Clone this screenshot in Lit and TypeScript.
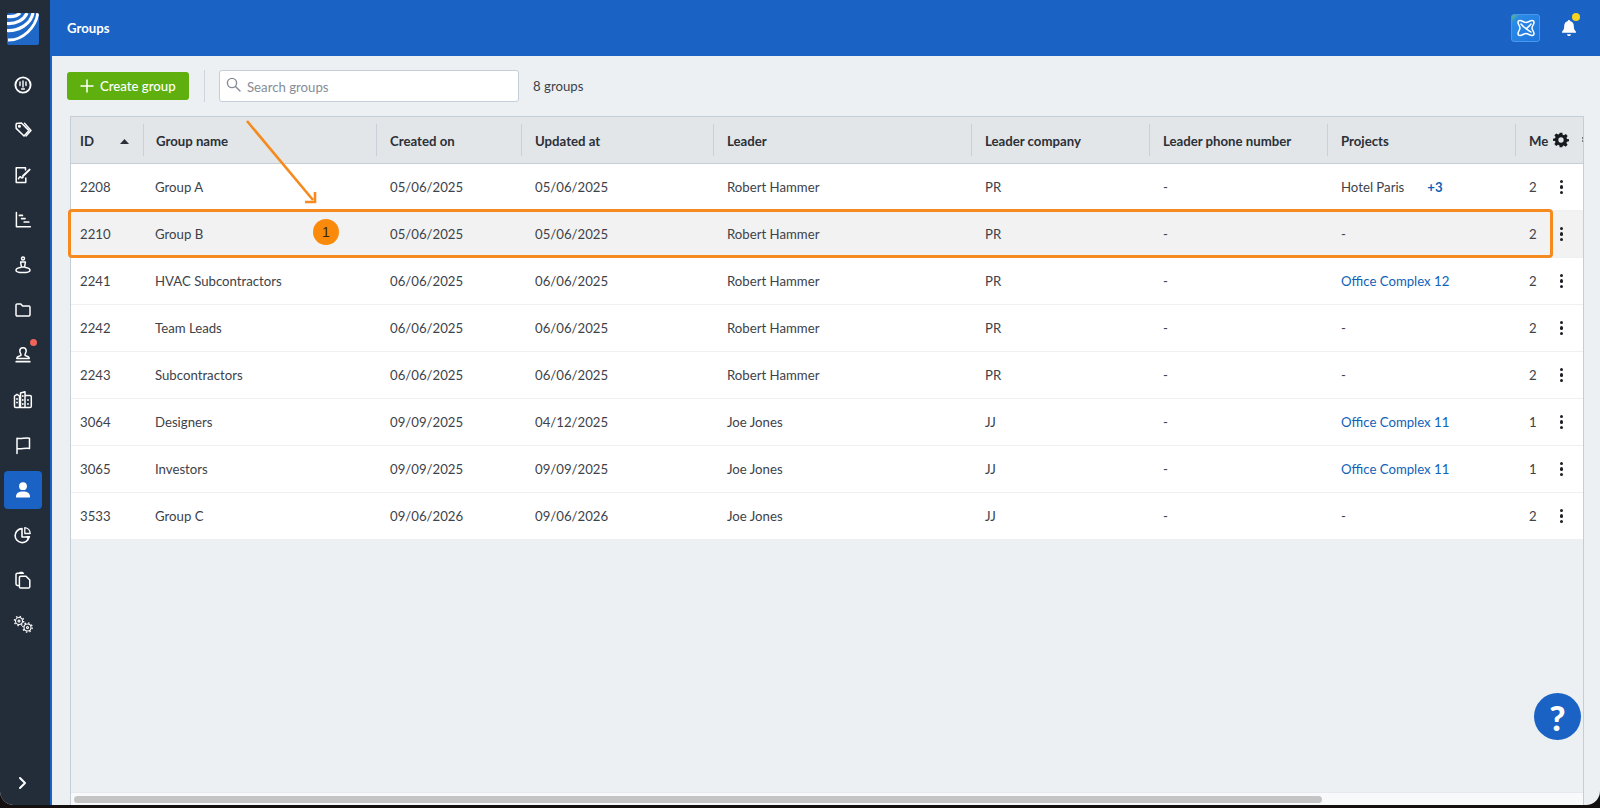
import { LitElement, html, css, svg } from 'lit';
import { customElement } from 'lit/decorators.js';

const line = (body: unknown) => html`<svg class="icon" viewBox="0 0 20 20" fill="none" stroke="#fff" stroke-width="1.5" stroke-linecap="round" stroke-linejoin="round">${body}</svg>`;

const NAV = [
  { name: 'dashboard', icon: line(svg`<circle cx="10" cy="10" r="7.6" stroke-width="1.9"/><path d="M10 6v6M7 7v3.5M13 7v3.5M8.6 14h2.8" stroke-width="1.4"/>`) },
  { name: 'tags', icon: line(svg`<path d="M3 5.5 3.4 3.4l5-.4 7.6 7.6-5 5.4L3.2 8.4z"/><path d="M11.5 3.2 18 10.4l-5 5.6"/><circle cx="6.4" cy="6.2" r=".8"/>`) },
  { name: 'reports', icon: line(svg`<path d="M12.5 5V2.8H3.2v14.6h9.6v-4.4"/><path d="M5.5 13.8c1-2 1.8-2.6 2.4-1.6.5 1 1.2 1 2.1.2"/><path d="m10 11 6.6-6.4" stroke-width="2"/>`) },
  { name: 'planning', icon: line(svg`<path d="M3.4 2.6v14.2h14"/><path d="M6.4 5.4h3M8.6 8.6h3.4M11.2 12h4.6" stroke-width="1.7"/>`) },
  { name: 'site', icon: line(svg`<circle cx="10" cy="3.6" r="1.5"/><path d="M7.6 7h4.8l-.8 5H8.4z"/><path d="M7.6 12.6C4.8 13 3 14 3 15.2c0 1.4 3 2.4 7 2.4s7-1 7-2.4c0-1.2-1.8-2.2-4.6-2.6"/>`) },
  { name: 'files', icon: line(svg`<path d="M3 5.2c0-.7.5-1.2 1.2-1.2h3.6l1.8 2h6.2c.7 0 1.2.5 1.2 1.2v7.6c0 .7-.5 1.2-1.2 1.2H4.2c-.7 0-1.2-.5-1.2-1.2z"/>`) },
  { name: 'approvals', dot: true, icon: line(svg`<path d="M8 10.4c.3-1.8-1.2-2.6-1.2-4.4a3.2 3.2 0 0 1 6.4 0c0 1.8-1.500 2.600-1.200 4.400l3.200 1.300c.8.300 1 .9 1 1.800H3.800c0-.9.200-1.500 1-1.800z"/><path d="M3.200 16.700h13.600" stroke-width="1.700"/>`) },
  { name: 'companies', icon: line(svg`<path d="M1.500 6 4 4.300l2.500 1.700v11.500H2.800c-.8 0-1.300-.5-1.300-1.300z"/><path d="M7.500 17.500V3L12 1.800v15.700zM12 5.500h5c.8 0 1.300.5 1.300 1.300v9.400c0 .8-.5 1.300-1.300 1.300h-5"/><path d="M4 9v.1M4 12.500v.1M9.800 6v.1M9.800 10v.1M9.800 14v.1M15 10v.1M15 14v.1" stroke-width="1.800"/>`) },
  { name: 'issues', icon: line(svg`<path d="M4 18.500V3.200c3.500 1.200 8.500-1 12.500 0v10.300c-4-1-9 1.200-12.500 0"/>`) },
  { name: 'groups', active: true, icon: html`<svg class="icon" viewBox="0 0 20 20" fill="#fff"><circle cx="10" cy="6.200" r="3.900"/><path d="M3 17c0-3.800 2.600-5.400 7-5.400s7 1.600 7 5.400c0 .4-.3.600-.7.600H3.700c-.4 0-.7-.2-.7-.6z"/></svg>` },
  { name: 'analytics', icon: line(svg`<path d="M9 3.600a7 7 0 1 0 7 8.400H9z" stroke-width="1.600"/><path d="M11.800 2.600a6 6 0 0 1 5.400 5.900h-5.400z" stroke-width="1.300"/><path d="m12.800 11 4.600.1-2.300 3.600z" fill="#fff" stroke="none"/>`) },
  { name: 'documents', icon: line(svg`<path d="M5.500 15.500H4.400c-.8 0-1.400-.6-1.400-1.400V4.600c0-.8.600-1.400 1.400-1.400h6"/><path d="M6.400 7.600c0-.8.600-1.400 1.400-1.400h5.200l3.800 3.800v6.700c0 .8-.6 1.400-1.400 1.400H7.800c-.8 0-1.400-.6-1.400-1.400z"/><path d="M7 2.400h2.400"/>`) },
  { name: 'settings', icon: line(svg`<g stroke-width="1.100"><circle cx="6" cy="6" r="3.500"/><circle cx="6" cy="6" r="4.700" stroke-width="1.300" stroke-dasharray="1.500 2.190" stroke-linecap="butt"/><circle cx="6" cy="6" r="1"/><circle cx="14.500" cy="12.500" r="3.500"/><circle cx="14.500" cy="12.500" r="4.700" stroke-width="1.300" stroke-dasharray="1.500 2.190" stroke-linecap="butt"/><circle cx="14.500" cy="12.500" r="1"/></g>`) },
];

const ROWS = [
  { id: '2208', name: 'Group A', created: '05/06/2025', updated: '05/06/2025', leader: 'Robert Hammer', company: 'PR', project: 'Hotel Paris', more: '+3', members: '2' },
  { id: '2210', name: 'Group B', created: '05/06/2025', updated: '05/06/2025', leader: 'Robert Hammer', company: 'PR', project: '-', members: '2', selected: true },
  { id: '2241', name: 'HVAC Subcontractors', created: '06/06/2025', updated: '06/06/2025', leader: 'Robert Hammer', company: 'PR', project: 'Office Complex 12', link: true, members: '2' },
  { id: '2242', name: 'Team Leads', created: '06/06/2025', updated: '06/06/2025', leader: 'Robert Hammer', company: 'PR', project: '-', members: '2' },
  { id: '2243', name: 'Subcontractors', created: '06/06/2025', updated: '06/06/2025', leader: 'Robert Hammer', company: 'PR', project: '-', members: '2' },
  { id: '3064', name: 'Designers', created: '09/09/2025', updated: '04/12/2025', leader: 'Joe Jones', company: 'JJ', project: 'Office Complex 11', link: true, members: '1' },
  { id: '3065', name: 'Investors', created: '09/09/2025', updated: '09/09/2025', leader: 'Joe Jones', company: 'JJ', project: 'Office Complex 11', link: true, members: '1' },
  { id: '3533', name: 'Group C', created: '09/06/2026', updated: '09/06/2026', leader: 'Joe Jones', company: 'JJ', project: '-', members: '2' },
];

const COLUMNS = ['Group name', 'Created on', 'Updated at', 'Leader', 'Leader company', 'Leader phone number', 'Projects', 'Me'];

@customElement('app-root')
export class AppRoot extends LitElement {
  static styles = css`
    :host {
      display: block;
      height: 808px;
      background: #14100f;
      font-family: Lato, 'Liberation Sans', sans-serif;
      font-size: 13.2px;
      color: #3d4249;
    }

    .frame {
      position: relative;
      display: flex;
      height: 805px;
      overflow: hidden;
      background: #ecf0f3;
      border-radius: 0 0 14px 14px;
    }

    .sidebar {
      flex: 0 0 46px;
      display: flex;
      flex-direction: column;
      align-items: center;
      padding: 13px 4px 6px 0;
      background: #232c39;
      border-right: 2px solid #1a62c4;
    }

    .logo {
      width: 32px;
      height: 32px;
      margin-bottom: 21px;
      border-radius: 2px;
    }

    .nav {
      display: flex;
      flex-direction: column;
      gap: 7px;
    }

    .nav-item {
      position: relative;
      display: flex;
      align-items: center;
      justify-content: center;
      width: 38px;
      height: 38px;
      border-radius: 4px;
    }

    .nav-item.active {
      background: #1a62c4;
    }

    .nav-dot {
      position: absolute;
      top: 3px;
      right: 5px;
      width: 7px;
      height: 7px;
      border-radius: 50%;
      background: #f0645a;
    }

    .icon {
      width: 20px;
      height: 20px;
    }

    .expand {
      margin-top: auto;
      display: flex;
      align-items: center;
      height: 32px;
    }

    .main {
      flex: 1;
      min-width: 0;
      display: flex;
      flex-direction: column;
    }

    .topbar {
      flex: 0 0 56px;
      box-sizing: border-box;
      display: flex;
      align-items: center;
      padding: 0 15px 1px;
      background: #1a62c4;
      color: #fff;
      font-weight: 700;
    }

    .topbar-title {
      flex: 1;
    }

    .atom {
      display: flex;
      align-items: center;
      justify-content: center;
      width: 29px;
      height: 28px;
      box-sizing: border-box;
      border: 1px solid #4a97ee;
      border-radius: 3px;
      background: linear-gradient(135deg, #62bd7c 0%, #2a8be6 16%, #1f74de 100%);
    }

    .bell {
      position: relative;
      display: flex;
      margin: 0 8px 0 21px;
    }

    .bell-dot {
      position: absolute;
      top: -6px;
      right: -3px;
      width: 8px;
      height: 8px;
      border-radius: 50%;
      background: #f7d31e;
    }

    .toolbar {
      flex: 0 0 60px;
      display: flex;
      align-items: center;
      padding-left: 15px;
    }

    .create {
      display: flex;
      align-items: center;
      gap: 6px;
      height: 28px;
      width: 122px;
      box-sizing: border-box;
      padding: 0 0 1px 13px;
      border-radius: 3px;
      background: #5fb00f;
      color: #fff;
      font-weight: 500;
    }

    .divider {
      width: 1px;
      height: 32px;
      margin: 0 14px 0 15px;
      background: #cfd6dd;
    }

    .search {
      display: flex;
      align-items: center;
      gap: 6px;
      width: 300px;
      height: 32px;
      box-sizing: border-box;
      padding: 1px 0 0 6px;
      border: 1px solid #c5ced8;
      border-radius: 3px;
      background: #fff;
      color: #868d96;
    }

    .search svg {
      margin-top: -5px;
    }

    .count {
      margin-left: 14px;
    }

    .table {
      flex: 1;
      display: flex;
      flex-direction: column;
      min-height: 0;
      margin: 0 16px 0 18px;
      border: 1px solid #c5ced8;
      border-width: 1px 1px 0;
    }

    .row {
      display: grid;
      grid-template-columns: 72px 233px 145px 192px 258px 178px 178px 188px 34px 1fr;
      align-items: center;
      height: 47px;
      box-sizing: border-box;
      padding-bottom: 1px;
      background: #fff;
      border-bottom: 1px solid #eef0f2;
    }

    .row.selected {
      background: #f2f2f2;
    }

    .row.head {
      padding-bottom: 0;
      background: #e2e6e9;
      border-bottom: 1px solid #c5ced8;
      color: #2b3038;
      font-weight: 700;
    }

    .cell {
      padding-left: 14px;
      white-space: nowrap;
      overflow: hidden;
    }

    .cell.first {
      padding-left: 9px;
    }

    .head .cell {
      display: flex;
      align-items: center;
      height: 32px;
      padding: 2px 0 0 13px;
      box-sizing: border-box;
      border-left: 1px solid #c9d0d8;
    }

    .head .cell.first {
      justify-content: space-between;
      padding-left: 9px;
      padding-right: 14px;
      border-left: 0;
    }

    .head .cell.group {
      padding-left: 10px;
    }

    .row .cell.group {
      padding-left: 12px;
    }

    .link {
      color: #0f62b8;
    }

    .more {
      margin-left: 23px;
      color: #0f62b8;
      font-weight: 700;
    }

    .actions {
      display: flex;
      align-items: center;
      justify-content: space-between;
      padding-left: 4px;
    }

    .grip {
      width: 1px;
      height: 6px;
      background: radial-gradient(circle, #777 0 1px, transparent 1px) 0 0 / 1px 3px;
    }

    .kebab {
      display: flex;
      flex-direction: column;
      gap: 2px;
      padding: 1px 0 0 7px;
    }

    .kebab span {
      width: 3.200px;
      height: 3.200px;
      border-radius: 50%;
      background: #1c1f24;
    }

    .track {
      margin-top: auto;
      height: 13px;
      box-sizing: border-box;
      padding: 3px 0 0 3px;
      background: #f8f9fa;
      border-top: 1px solid #e6e9ed;
    }

    .thumb {
      width: 1248px;
      height: 7px;
      border-radius: 4px;
      background: #c4c4c4;
    }

    .outline {
      position: absolute;
      left: 68px;
      top: 209px;
      width: 1485px;
      height: 49px;
      box-sizing: border-box;
      border: 3px solid #f58a1f;
      border-radius: 4px;
      pointer-events: none;
    }

    .arrow {
      position: absolute;
      left: 240px;
      top: 115px;
      width: 80px;
      height: 92px;
      pointer-events: none;
    }

    .badge {
      position: absolute;
      left: 313px;
      top: 219px;
      display: flex;
      align-items: center;
      justify-content: center;
      width: 26px;
      height: 26px;
      border-radius: 50%;
      background: #f98a0b;
      color: #3a2408;
      font-family: 'Liberation Sans', sans-serif;
      font-size: 14px;
    }

    .help {
      position: absolute;
      left: 1534px;
      top: 693px;
      display: flex;
      align-items: center;
      justify-content: center;
      width: 47px;
      height: 47px;
      box-sizing: border-box;
      padding-top: 1px;
      border-radius: 50%;
      background: #1a62c4;
      color: #fff;
      font-family: Lato, sans-serif;
      font-size: 35px;
      font-weight: 900;
    }
  `;

  private renderRow(row: (typeof ROWS)[number]) {
    return html`
      <div class="row ${row.selected ? 'selected' : ''}">
        <div class="cell first">${row.id}</div>
        <div class="cell group">${row.name}</div>
        <div class="cell">${row.created}</div>
        <div class="cell">${row.updated}</div>
        <div class="cell">${row.leader}</div>
        <div class="cell">${row.company}</div>
        <div class="cell">-</div>
        <div class="cell ${row.link ? 'link' : ''}">${row.project}${row.more ? html`<span class="more">${row.more}</span>` : ''}</div>
        <div class="cell">${row.members}</div>
        <div class="actions"><div class="kebab"><span></span><span></span><span></span></div></div>
      </div>
    `;
  }

  render() {
    return html`
      <div class="frame">
        <aside class="sidebar">
          <svg class="logo" viewBox="0 0 32 32">
            <rect width="32" height="32" fill="#1f68c8"/>
            <g fill="none" stroke="#fff" stroke-width="3.200">
              <path d="M0 3.500C6 4 11 2.500 13 0"/>
              <path d="M0 10.500C9 11 17 7 20 0"/>
              <path d="M0 17.500C12 18 24 11 26 0"/>
            </g>
            <path d="M1 27C16 27.500 29 14 30.800 0" fill="none" stroke="#fff" stroke-width="2.800"/>
          </svg>
          <nav class="nav">
            ${NAV.map(item => html`
              <div class="nav-item ${item.active ? 'active' : ''}" title=${item.name}>
                ${item.icon}
                ${item.dot ? html`<span class="nav-dot"></span>` : ''}
              </div>
            `)}
          </nav>
          <div class="expand">
            <svg width="12" height="14" viewBox="0 0 12 14" fill="none" stroke="#fff" stroke-width="2" stroke-linecap="round" stroke-linejoin="round"><path d="m3 2 5 5-5 5"/></svg>
          </div>
        </aside>

        <div class="main">
          <header class="topbar">
            <div class="topbar-title">Groups</div>
            <div class="atom">
              <svg width="20" height="20" viewBox="0 0 20 20" fill="none" stroke="#fff" stroke-width="1.500" stroke-linecap="round" stroke-linejoin="round">
                <path d="M4 2.500c2 0 4 2 6 2s4-2 6-2c1.500 0 2 1 2 2 0 2-2 3.500-2 5.500s2 3.500 2 5.500c0 1-.5 2-2 2-2 0-4-2-6-2s-4 2-6 2c-1.500 0-2-1-2-2 0-2 2-3.500 2-5.500S2 6.500 2 4.500c0-1 .5-2 2-2z"/>
                <path d="M5 6c3 4 7 6 10 8M15 6c-1.500 2-3 3-4 4"/>
              </svg>
            </div>
            <div class="bell">
              <svg width="16" height="18" viewBox="0 0 16 18" fill="#fff">
                <path d="M8 1c.7 0 1.100.5 1.100 1.100 2.400.5 3.700 2.500 3.700 5 0 3 .8 4.200 2.200 5.600v1H1v-1c1.400-1.400 2.200-2.600 2.200-5.600 0-2.500 1.300-4.500 3.700-5C6.900 1.500 7.300 1 8 1z"/>
                <path d="M6 15.200h4c0 1.100-.9 1.800-2 1.800s-2-.7-2-1.800z"/>
              </svg>
              <span class="bell-dot"></span>
            </div>
          </header>

          <div class="toolbar">
            <div class="create">
              <svg width="14" height="14" viewBox="0 0 14 14" stroke="#fff" stroke-width="1.500" stroke-linecap="round"><path d="M7 1v12M1 7h12"/></svg>
              Create group
            </div>
            <div class="divider"></div>
            <div class="search">
              <svg width="15" height="15" viewBox="0 0 15 15" fill="none" stroke="#868d96" stroke-width="1.400" stroke-linecap="round"><circle cx="6" cy="6" r="4.600"/><path d="m9.500 9.500 4.500 4.500"/></svg>
              Search groups
            </div>
            <div class="count">8 groups</div>
          </div>

          <section class="table">
            <div class="row head">
              <div class="cell first">
                ID
                <svg width="9" height="5" viewBox="0 0 9 5" fill="#2b3038"><path d="M4.500 0 9 5H0z"/></svg>
              </div>
              ${COLUMNS.map((col, i) => html`<div class="cell ${i === 0 ? 'group' : ''}">${col}</div>`)}
              <div class="actions">
                <svg width="16" height="16" viewBox="0 0 24 24" fill="#16191d"><path fill-rule="evenodd" d="M10 1h4l.6 3.100 1.900.8 2.700-1.800 2.800 2.800-1.800 2.700.8 1.900L24 11v3l-3.100.6-.8 1.900 1.800 2.700-2.800 2.800-2.700-1.800-1.900.8L14 23h-4l-.6-3.100-1.900-.8-2.700 1.800L2 18.100l1.800-2.700-.8-1.900L0 13v-3l3.100-.6.8-1.900L2.100 4.900 4.900 2.100l2.700 1.800 1.900-.8zM12 8a4 4 0 1 0 0 8 4 4 0 0 0 0-8z"/></svg>
                <span class="grip"></span>
              </div>
            </div>
            ${ROWS.map(row => this.renderRow(row))}
            <div class="track"><div class="thumb"></div></div>
          </section>
        </div>

        <div class="outline"></div>
        <svg class="arrow" viewBox="0 0 80 92" fill="none" stroke="#f58a1f" stroke-width="2.600">
          <path d="m7 6 66 79"/>
          <path d="M75 77v10H65"/>
        </svg>
        <div class="badge">1</div>
        <div class="help">?</div>
      </div>
    `;
  }
}

declare global {
  interface HTMLElementTagNameMap {
    'app-root': AppRoot;
  }
}
